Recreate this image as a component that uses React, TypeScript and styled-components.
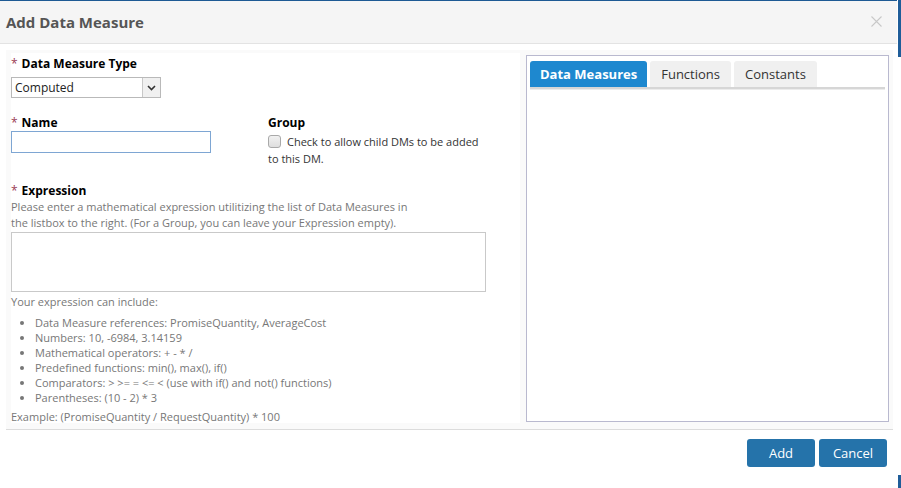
import styled, { createGlobalStyle } from 'styled-components';

const GlobalStyle = createGlobalStyle`
  html, body {
    margin: 0;
    padding: 0;
    background: #fff;
  }
  body {
    font-family: 'Open Sans', 'DejaVu Sans', sans-serif;
  }
`;

const Screen = styled.div`
  display: flex;
  width: 901px;
  height: 488px;
  overflow: hidden;
`;

const Modal = styled.div`
  width: 897px;
  display: flex;
  flex-direction: column;
  border-top: 1px solid #1d5a94;
  background: #fff;
`;

const SideStrip = styled.div`
  flex: 1;
  display: flex;
  flex-direction: column;
  justify-content: space-between;
  background: #fff;
`;

const StripBlock = styled.div<{ $h: number }>`
  height: ${(p) => p.$h}px;
  background: #1f5d99;
  margin-left: 1px;
`;

const Header = styled.div`
  height: 42px;
  background: #f5f5f5;
  border-bottom: 1px solid #e3e3e3;
  padding: 0 10px 0 6px;
  display: flex;
  align-items: center;
  justify-content: space-between;
`;

const Title = styled.h3`
  margin: 0;
  font-size: 15px;
  font-weight: 700;
  color: #555;
  padding-bottom: 1px;
`;

const CloseIcon = styled.svg`
  width: 11px;
  height: 11px;
  margin-right: 5px;
  margin-bottom: 2px;
`;

const Body = styled.div`
  padding: 6px 4px 0 6px;
`;

const ContentPanel = styled.div`
  height: 380px;
  box-sizing: border-box;
  background: #fafafa;
  border-bottom: 1px solid #dcdcdc;
  padding: 3px 4px 0 5px;
  display: flex;
`;

const FormColumn = styled.div`
  width: 509px;
  background: #fff;
  padding-top: 3px;
  margin-bottom: 6px;
`;

const Label = styled.div`
  font-size: 12px;
  font-weight: 700;
  color: #000;
  line-height: 16px;
`;

const Required = styled.span`
  color: #9b3b55;
  font-weight: 400;
  margin-right: 4px;
`;

const SelectBox = styled.div`
  margin-top: 5px;
  width: 150px;
  height: 21px;
  box-sizing: border-box;
  border: 1px solid #b9b9b9;
  display: flex;
  align-items: stretch;
  background: #fff;
`;

const SelectValue = styled.div`
  flex: 1;
  font-size: 12px;
  color: #222;
  line-height: 19px;
  padding-left: 3px;
`;

const SelectArrow = styled.div`
  width: 17px;
  border-left: 1px solid #c8c8c8;
  background: #f0f0f0;
  display: flex;
  align-items: center;
  justify-content: center;
`;

const FieldGrid = styled.div`
  display: grid;
  grid-template-columns: 257px 1fr;
  margin-top: 17px;
`;

const TextInput = styled.div`
  width: 200px;
  height: 22px;
  box-sizing: border-box;
  border: 1px solid #7ea6d3;
  background: #fff;
`;

const CheckRow = styled.div`
  display: flex;
  align-items: center;
  gap: 6px;
  margin-top: 2px;
  font-size: 11px;
  line-height: 17px;
  color: #333;
`;

const CheckBox = styled.span`
  width: 11px;
  height: 11px;
  border: 1px solid #a9a9a9;
  border-radius: 3px;
  background: linear-gradient(#f1f1f1, #dedede);
  flex-shrink: 0;
`;

const WrapText = styled.div`
  font-size: 11px;
  line-height: 17px;
  color: #333;
`;

const ExpressionBlock = styled.div`
  margin-top: 16px;
`;

const Hint = styled.p<{ $mt?: number }>`
  margin: ${(p) => p.$mt ?? 0}px 0 0;
  font-size: 11px;
  line-height: 16px;
  color: #777;
`;

const TextArea = styled.div`
  margin-top: 1px;
  width: 475px;
  height: 60px;
  box-sizing: border-box;
  border: 1px solid #c9c9c9;
  background: #fff;
`;

const IncludeList = styled.ul`
  margin: 5px 0 0;
  padding-left: 24px;
  font-size: 11px;
  line-height: 15px;
  color: #777;
`;

const RightBox = styled.div`
  flex: 1;
  margin: 2px 0 7px 6px;
  border: 1px solid #b9b9cf;
  background: #fff;
  padding: 5px 3px 0;
`;

const TabBar = styled.div`
  display: flex;
  gap: 3px;
  border-bottom: 2px solid #d6d6d6;
  box-shadow: 0 1px 0 #ececec;
`;

const Tab = styled.div<{ $active?: boolean }>`
  height: 26px;
  padding: 0 ${(p) => (p.$active ? 10 : 11)}px;
  display: flex;
  align-items: center;
  font-size: 13px;
  border-radius: 3px 3px 0 0;
  background: ${(p) => (p.$active ? '#1e88cf' : '#f0f0f0')};
  color: ${(p) => (p.$active ? '#fff' : '#333')};
  font-weight: ${(p) => (p.$active ? 700 : 400)};
`;

const Footer = styled.div`
  display: flex;
  justify-content: flex-end;
  gap: 4px;
  padding: 9px 6px 0 0;
`;

const Button = styled.button`
  width: 68px;
  height: 28px;
  border: none;
  border-radius: 3px;
  background: #2573aa;
  color: #fff;
  font-family: 'Open Sans', 'DejaVu Sans', sans-serif;
  font-size: 13px;
  padding: 0;
`;

const includes = [
  'Data Measure references: PromiseQuantity, AverageCost',
  'Numbers: 10, -6984, 3.14159',
  'Mathematical operators: + - * /',
  'Predefined functions: min(), max(), if()',
  'Comparators: > >= = <= < (use with if() and not() functions)',
  'Parentheses: (10 - 2) * 3',
];

const App = () => {
  return (
    <>
      <GlobalStyle />
      <Screen>
        <Modal>
          <Header>
            <Title>Add Data Measure</Title>
            <CloseIcon viewBox="0 0 11 11">
              <path d="M0.5 0.5L10.5 10.5M10.5 0.5L0.5 10.5" stroke="#c8c8c8" strokeWidth="1.1" />
            </CloseIcon>
          </Header>

          <Body>
            <ContentPanel>
              <FormColumn>
                <Label>
                  <Required>*</Required>Data Measure Type
                </Label>
                <SelectBox>
                  <SelectValue>Computed</SelectValue>
                  <SelectArrow>
                    <svg width="9" height="6" viewBox="0 0 9 6">
                      <path d="M1 1L4.5 4.5L8 1" fill="none" stroke="#333" strokeWidth="1.6" />
                    </svg>
                  </SelectArrow>
                </SelectBox>

                <FieldGrid>
                  <div>
                    <Label>
                      <Required>*</Required>Name
                    </Label>
                    <TextInput />
                  </div>
                  <div>
                    <Label>Group</Label>
                    <CheckRow>
                      <CheckBox />
                      Check to allow child DMs to be added
                    </CheckRow>
                    <WrapText>to this DM.</WrapText>
                  </div>
                </FieldGrid>

                <ExpressionBlock>
                  <Label>
                    <Required>*</Required>Expression
                  </Label>
                  <Hint>
                    Please enter a mathematical expression utilitizing the list of Data Measures in
                    <br />
                    the listbox to the right. (For a Group, you can leave your Expression empty).
                  </Hint>
                  <TextArea />
                  <Hint $mt={2}>Your expression can include:</Hint>
                  <IncludeList>
                    {includes.map((item) => (
                      <li key={item}>{item}</li>
                    ))}
                  </IncludeList>
                  <Hint $mt={4}>Example: (PromiseQuantity / RequestQuantity) * 100</Hint>
                </ExpressionBlock>
              </FormColumn>

              <RightBox>
                <TabBar>
                  <Tab $active>Data Measures</Tab>
                  <Tab>Functions</Tab>
                  <Tab>Constants</Tab>
                </TabBar>
              </RightBox>
            </ContentPanel>

            <Footer>
              <Button>Add</Button>
              <Button>Cancel</Button>
            </Footer>
          </Body>
        </Modal>
        <SideStrip>
          <StripBlock $h={57} />
          <StripBlock $h={13} />
        </SideStrip>
      </Screen>
    </>
  );
};

export default App;
